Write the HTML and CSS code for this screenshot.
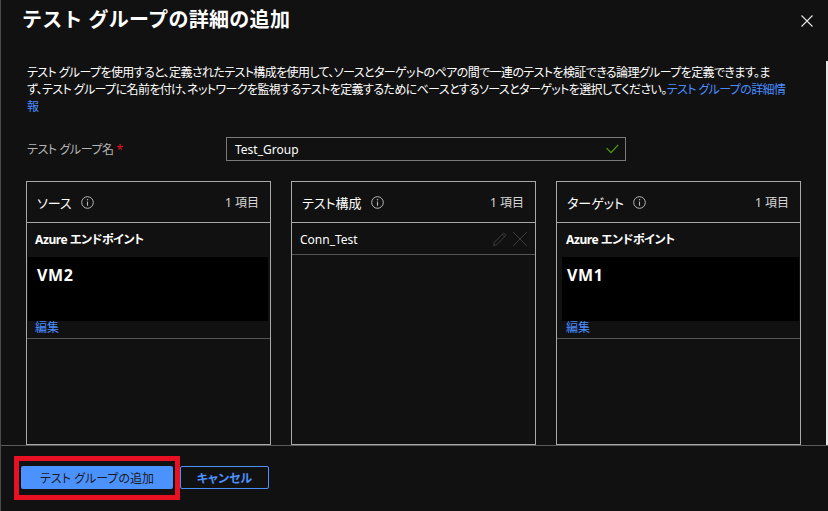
FILE: index.html
```html
<!DOCTYPE html>
<html lang="ja">
<head>
<meta charset="utf-8">
<title>テスト グループの詳細の追加</title>
<link rel="stylesheet" href="styles.css">
</head>
<body>
<div class="dialog">
  <header class="dlg-header">
    <h1 class="dlg-title">テスト グループの詳細の追加</h1>
    <button class="close-btn" aria-label="閉じる">
      <svg width="12" height="12" viewBox="0 0 12 12"><path d="M0.5 0.5 L11.5 11.5 M11.5 0.5 L0.5 11.5" stroke="#e6e6e6" stroke-width="1.1" fill="none"/></svg>
    </button>
  </header>

  <div class="dlg-body">
    <main class="dlg-main">
      <p class="desc">テスト グループを使用すると、定義されたテスト構成を使用して、ソースとターゲットのペアの間で一連のテストを検証できる論理グループを定義できます。ま<br>ず、テスト グループに名前を付け、ネットワークを監視するテストを定義するためにベースとするソースとターゲットを選択してください。<a class="link" href="#">テスト グループの詳細情<br>報</a></p>

      <div class="form-row">
        <label class="form-label">テスト グループ名 <span class="req">*</span></label>
        <div class="input">
          <span class="input-text">Test_Group</span>
          <svg class="check" width="13" height="10" viewBox="0 0 13 10"><path d="M0.6 4.2 L5 8.6 L12.2 0.8" stroke="#57a300" stroke-width="1.2" fill="none"/></svg>
        </div>
      </div>

      <div class="panels">
        <section class="panel">
          <div class="panel-head">
            <span class="panel-title">ソース</span>
            <svg class="info" width="13" height="13" viewBox="0 0 13 13"><circle cx="6.5" cy="6.5" r="5.8" stroke="#b8b8b8" stroke-width="1" fill="none"/><path d="M6.5 5.6 V9.8" stroke="#b8b8b8" stroke-width="1.1"/><circle cx="6.5" cy="3.8" r="0.75" fill="#b8b8b8"/></svg>
            <span class="count">1 項目</span>
          </div>
          <div class="item">
            <div class="item-title">Azure エンドポイント</div>
            <div class="vm-box"><span class="vm-name">VM2</span></div>
            <a class="edit" href="#">編集</a>
          </div>
        </section>

        <section class="panel">
          <div class="panel-head">
            <span class="panel-title">テスト構成</span>
            <svg class="info" width="13" height="13" viewBox="0 0 13 13"><circle cx="6.5" cy="6.5" r="5.8" stroke="#b8b8b8" stroke-width="1" fill="none"/><path d="M6.5 5.6 V9.8" stroke="#b8b8b8" stroke-width="1.1"/><circle cx="6.5" cy="3.8" r="0.75" fill="#b8b8b8"/></svg>
            <span class="count">1 項目</span>
          </div>
          <div class="config-row">
            <span class="config-name">Conn_Test</span>
            <span class="row-actions">
              <svg width="16" height="16" viewBox="0 0 16 16"><path d="M1.5 14.5 L2.3 11.3 L11.6 2 L14 4.4 L4.7 13.7 Z M10.2 3.4 L12.6 5.8" stroke="#3e3e3e" stroke-width="1" fill="none"/></svg>
              <svg width="16" height="16" viewBox="0 0 16 16"><path d="M1 1 L15 15 M15 1 L1 15" stroke="#3e3e3e" stroke-width="1" fill="none"/></svg>
            </span>
          </div>
        </section>

        <section class="panel">
          <div class="panel-head">
            <span class="panel-title">ターゲット</span>
            <svg class="info" width="13" height="13" viewBox="0 0 13 13"><circle cx="6.5" cy="6.5" r="5.8" stroke="#b8b8b8" stroke-width="1" fill="none"/><path d="M6.5 5.6 V9.8" stroke="#b8b8b8" stroke-width="1.1"/><circle cx="6.5" cy="3.8" r="0.75" fill="#b8b8b8"/></svg>
            <span class="count">1 項目</span>
          </div>
          <div class="item item-alt">
            <div class="item-title">Azure エンドポイント</div>
            <div class="vm-box"><span class="vm-name">VM1</span></div>
            <a class="edit" href="#">編集</a>
          </div>
        </section>
      </div>
    </main>
    <div class="scrollbar"></div>
  </div>

  <footer class="dlg-footer">
    <span class="highlight"><button class="btn-primary">テスト グループの追加</button></span>
    <button class="btn-secondary">キャンセル</button>
  </footer>
</div>
</body>
</html>
```

FILE: styles.css
```css
* { box-sizing: border-box; }

html, body {
  margin: 0;
  padding: 0;
  background: #111111;
}

body {
  width: 828px;
  height: 511px;
  overflow: hidden;
  font-family: "Noto Sans", "Noto Sans CJK JP", sans-serif;
  font-feature-settings: "palt";
  color: #ffffff;
  font-size: 12px;
}

.dialog {
  display: flex;
  flex-direction: column;
  height: 511px;
  border-left: 1px solid #4a4a4a;
}

.dlg-header {
  height: 56px;
  display: flex;
  align-items: flex-start;
  justify-content: space-between;
  padding: 0 15px 0 21px;
}

.dlg-title {
  margin: 5px 0 0;
  font-size: 20px;
  line-height: 30px;
  font-weight: 700;
  font-feature-settings: normal;
  letter-spacing: 0.3px;
  color: #ffffff;
}

.close-btn {
  margin-top: 15px;
  padding: 0;
  border: 0;
  background: none;
  width: 12px;
  height: 12px;
  display: flex;
}

.dlg-body {
  flex: 1;
  display: flex;
  min-height: 0;
}

.dlg-main {
  flex: 1;
  display: flex;
  flex-direction: column;
  padding: 8px 25px 0 25px;
  min-width: 0;
}

.scrollbar {
  width: 2px;
  margin-top: 5px;
  background: #e8e8e8;
}

.desc {
  margin: 0;
  padding: 0 0 0 1px;
  line-height: 17px;
  font-size: 12px;
  letter-spacing: -0.6px;
  white-space: nowrap;
  color: #ffffff;
}

.link {
  color: #4a8cff;
  text-decoration: none;
}

.form-row {
  display: flex;
  align-items: center;
  margin-top: 22px;
}

.form-label {
  width: 200px;
  padding-left: 1px;
  color: #b4b4b4;
  font-size: 12px;
  letter-spacing: -0.4px;
}

.req { color: #e81123; }

.input {
  width: 400px;
  height: 24px;
  border: 1px solid #7a7a7a;
  display: flex;
  align-items: center;
  justify-content: space-between;
  padding: 0 6px 0 8px;
}

.input-text { color: #ffffff; font-size: 12px; }

.panels {
  flex: 1;
  display: flex;
  gap: 20px;
  margin-top: 20px;
}

.panel {
  flex: 1;
  border: 1px solid #a8a8a8;
  display: flex;
  flex-direction: column;
}

.panel-head {
  height: 41px;
  border-bottom: 1px solid #a8a8a8;
  display: flex;
  align-items: center;
  padding: 0 11px 0 10px;
}

.panel-title {
  font-size: 13px;
  color: #ffffff;
}

.info { margin-left: 9px; }

.count {
  margin-left: auto;
  font-size: 12px;
  color: #d6d6d6;
}

.item {
  border-bottom: 1px solid #555555;
  padding-bottom: 4px;
}

.item-title {
  height: 34px;
  line-height: 34px;
  padding-left: 8px;
  font-weight: 700;
  font-size: 12px;
  letter-spacing: -0.4px;
}

.vm-box {
  height: 64px;
  margin: 0 2px 0 1px;
  background: #000000;
  padding: 8px 0 0 9px;
}

.vm-name {
  font-size: 16px;
  font-weight: 700;
  line-height: 20px;
  letter-spacing: 0.6px;
}

.edit {
  display: block;
  padding-left: 8px;
  line-height: 13px;
  color: #4a8cff;
  text-decoration: none;
  font-size: 12px;
}

.item-alt .item-title { padding-left: 9px; }
.item-alt .vm-box { margin: 0 1px 0 5px; padding-left: 5px; }
.item-alt .edit { padding-left: 9px; }

.config-row {
  height: 32px;
  border-bottom: 1px solid #555555;
  display: flex;
  align-items: flex-start;
  padding: 8px 7px 0 8px;
}

.config-name { line-height: 17px; }

.row-actions {
  margin-left: auto;
  display: flex;
  gap: 4px;
}

.dlg-footer {
  height: 66px;
  border-top: 1px solid #5a5a5a;
  display: flex;
  align-items: flex-start;
  padding: 10px 0 0 13px;
}

.highlight {
  display: flex;
  border: 5px solid #e81123;
  padding: 5px 2px 6px 2px;
}

.btn-primary {
  width: 152px;
  height: 23px;
  border: 0;
  border-radius: 2px;
  background: #4c92ff;
  color: #1b1b1b;
  font-family: inherit;
  font-feature-settings: "palt";
  font-size: 12px;
  padding: 0;
}

.btn-secondary {
  width: 89px;
  height: 23px;
  margin-top: 10px;
  border: 1px solid #4c92ff;
  border-radius: 2px;
  background: transparent;
  color: #4c92ff;
  font-family: inherit;
  font-feature-settings: "palt";
  font-weight: 700;
  font-size: 12px;
  padding: 0;
}
```
